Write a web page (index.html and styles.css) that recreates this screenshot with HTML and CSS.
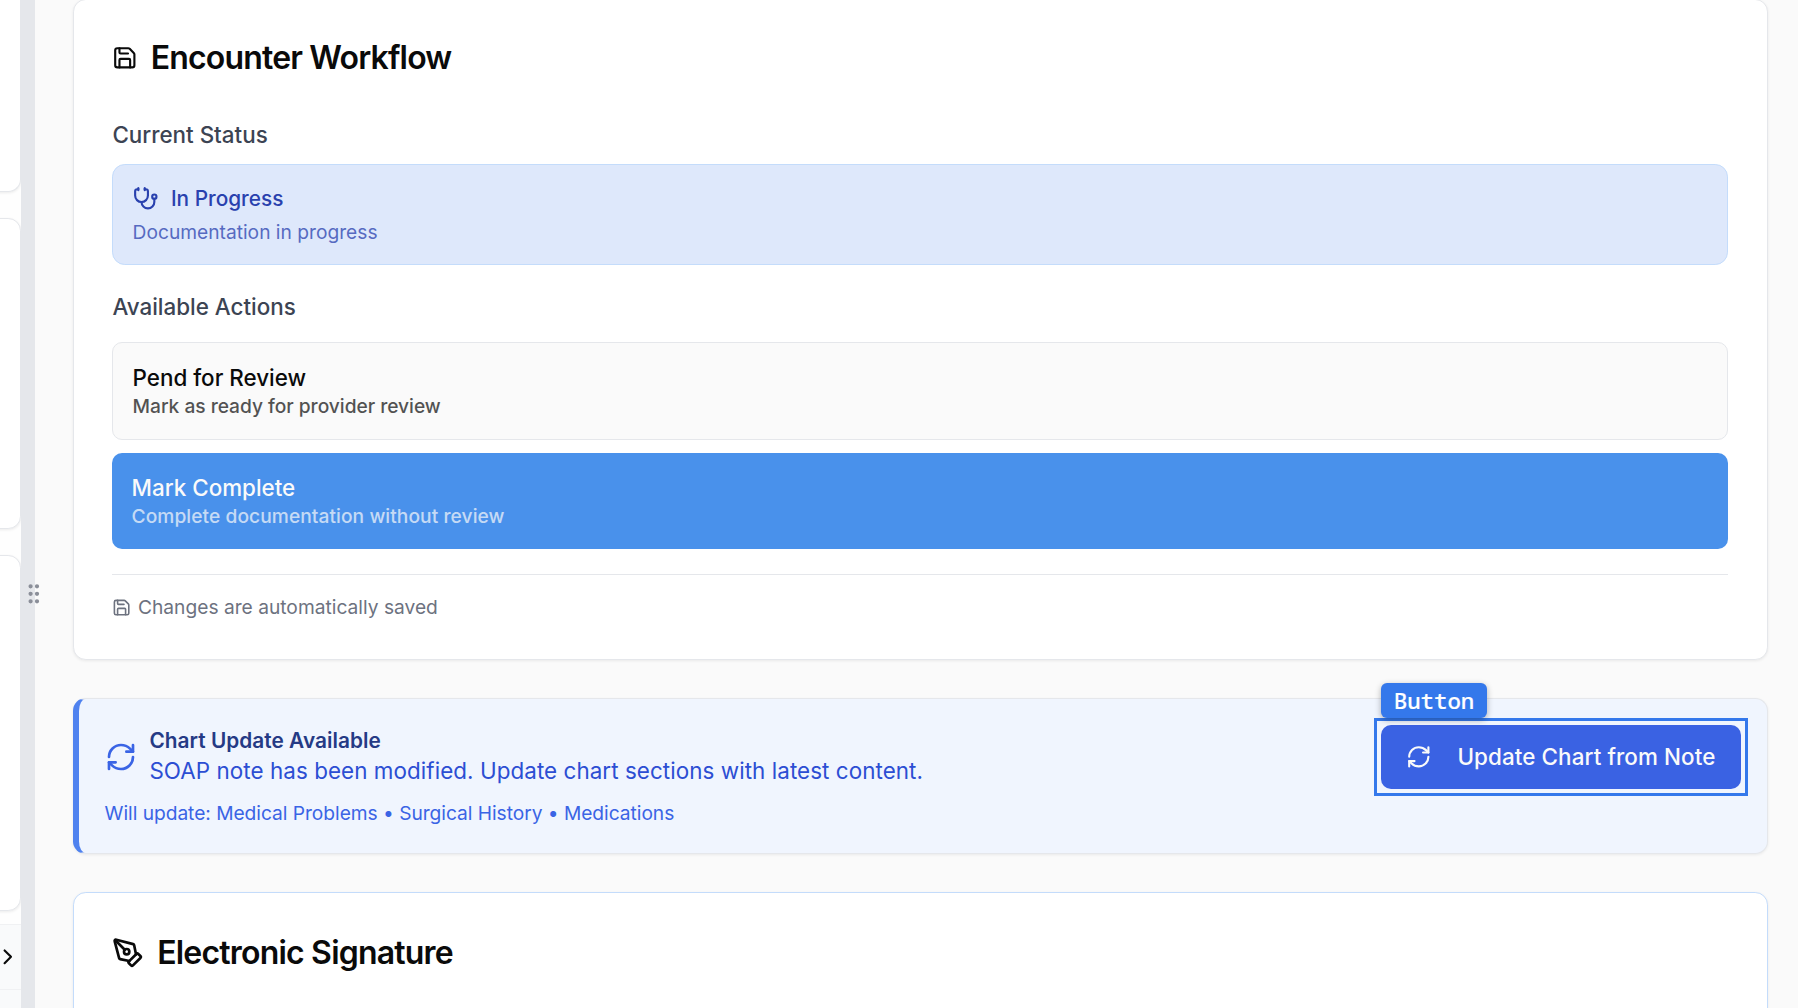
FILE: index.html
```html
<!DOCTYPE html>
<html lang="en">
<head>
<meta charset="utf-8">
<title>Encounter Workflow</title>
<link rel="stylesheet" href="styles.css">
</head>
<body>
<svg class="sprite" aria-hidden="true">
  <symbol id="save" viewBox="0 0 24 24"><path d="M15.2 3a2 2 0 0 1 1.4.6l3.8 3.8a2 2 0 0 1 .6 1.4V19a2 2 0 0 1-2 2H5a2 2 0 0 1-2-2V5a2 2 0 0 1 2-2z"/><path d="M17 21v-7a1 1 0 0 0-1-1H8a1 1 0 0 0-1 1v7"/><path d="M7 3v4a1 1 0 0 0 1 1h7"/></symbol>
  <symbol id="stethoscope" viewBox="0 0 24 24"><path d="M11 2v2"/><path d="M5 2v2"/><path d="M5 3H4a2 2 0 0 0-2 2v4a6 6 0 0 0 12 0V5a2 2 0 0 0-2-2h-1"/><path d="M8 15a6 6 0 0 0 12 0v-3"/><circle cx="20" cy="10" r="2"/></symbol>
  <symbol id="refresh" viewBox="0 0 24 24"><path d="M3 12a9 9 0 0 1 9-9 9.75 9.75 0 0 1 6.74 2.74L21 8"/><path d="M21 3v5h-5"/><path d="M21 12a9 9 0 0 1-9 9 9.75 9.75 0 0 1-6.74-2.74L3 16"/><path d="M8 16H3v5"/></symbol>
  <symbol id="pen" viewBox="0 0 24 24"><path d="M15.707 21.293a1 1 0 0 1-1.414 0l-1.586-1.586a1 1 0 0 1 0-1.414l5.586-5.586a1 1 0 0 1 1.414 0l1.586 1.586a1 1 0 0 1 0 1.414z"/><path d="m18 13-1.375-6.874a1 1 0 0 0-.746-.776L3.235 2.028a1 1 0 0 0-1.207 1.207L5.35 15.879a1 1 0 0 0 .776.746L13 18"/><path d="m2.3 2.3 7.286 7.286"/><circle cx="11" cy="11" r="2"/></symbol>
  <symbol id="chevron" viewBox="0 0 24 24"><path d="m9 18 6-6-6-6"/></symbol>
  <symbol id="grip" viewBox="0 0 24 24"><circle cx="9" cy="12" r="1"/><circle cx="9" cy="5" r="1"/><circle cx="9" cy="19" r="1"/><circle cx="15" cy="12" r="1"/><circle cx="15" cy="5" r="1"/><circle cx="15" cy="19" r="1"/></symbol>
</svg>
<div class="layout">
  <aside class="side">
    <div class="side-card side-card-first"></div>
    <div class="side-card side-card-second"></div>
    <div class="side-card side-card-third"></div>
    <div class="side-row"><svg class="icon icon-md chevron"><use href="#chevron"/></svg></div>
    <div class="side-row side-row-last"></div>
  </aside>
  <div class="splitter"><svg class="icon icon-md grip"><use href="#grip"/></svg></div>
  <main class="main">
    <section class="card workflow">
      <h2 class="title"><svg class="icon icon-md title-save"><use href="#save"/></svg>Encounter Workflow</h2>
      <h3 class="label">Current Status</h3>
      <div class="status">
        <div class="status-row"><svg class="icon icon-md"><use href="#stethoscope"/></svg>In Progress</div>
        <p class="status-text">Documentation in progress</p>
      </div>
      <h3 class="label label-actions">Available Actions</h3>
      <div class="actions">
        <button class="action action-outline"><span>Pend for Review</span><span class="action-hint">Mark as ready for provider review</span></button>
        <button class="action action-primary"><span>Mark Complete</span><span class="action-hint">Complete documentation without review</span></button>
      </div>
      <p class="saved"><svg class="icon icon-sm"><use href="#save"/></svg><span class="saved-text">Changes are automatically saved</span></p>
    </section>
    <section class="card alert">
      <div class="alert-row">
        <svg class="icon icon-lg alert-icon"><use href="#refresh"/></svg>
        <div class="alert-copy">
          <h4 class="alert-title">Chart Update Available</h4>
          <p class="alert-text">SOAP note has been modified. Update chart sections with latest content.</p>
        </div>
        <div class="update-wrap">
          <button class="update"><svg class="icon icon-md"><use href="#refresh"/></svg>Update Chart from Note</button>
          <div class="inspect"></div>
          <span class="inspect-tag">Button</span>
        </div>
      </div>
      <p class="alert-list">Will update: Medical Problems • Surgical History • Medications</p>
    </section>
    <section class="card signature">
      <h2 class="title title-signature"><svg class="icon icon-lg title-pen"><use href="#pen"/></svg>Electronic Signature</h2>
    </section>
  </main>
</div>
</body>
</html>
```
FILE: styles.css
```css
* { box-sizing: border-box; margin: 0; padding: 0; }
html, body { height: 100%; overflow: hidden; }
body { background: #fafafa; color: #0a0a0a; font-family: Inter, "Liberation Sans", sans-serif; font-size: 22.4px; }
button { font: inherit; border: 0; text-align: left; }

.sprite { display: none; }
.icon { flex: none; fill: none; stroke: currentColor; stroke-width: 2; stroke-linecap: round; stroke-linejoin: round; }
.icon-sm { width: 19.2px; height: 19.2px; }
.icon-md { width: 25.6px; height: 25.6px; }
.icon-lg { width: 32px; height: 32px; }

.layout { display: flex; height: 1008px; overflow: hidden; }

.side { display: flex; flex-direction: column; flex: none; width: 20.6px; background: #fefefe; overflow: hidden; }
.side-card { flex: none; align-self: flex-end; width: 60px; background: #fff; border: 1px solid #e5e7eb; border-radius: 12.8px; box-shadow: 0 1px 3px rgba(0, 0, 0, .08); margin-bottom: 26.4px; }
.side-card-first { height: 192px; border-top: 0; border-top-right-radius: 0; }
.side-card-second { height: 310.4px; }
.side-card-third { height: 355.6px; margin-bottom: 13.2px; }
.side-row { display: flex; align-items: center; flex: none; height: 65px; border-top: 1px solid #f0f1f3; background: #f9fafb; }
.side-row-last { height: 30px; }
.chevron { margin-left: -5.2px; color: #0a0a0a; }

.splitter { display: flex; align-items: center; justify-content: center; flex: none; width: 14.4px; background: #e5e7eb; z-index: 1; }
.grip { flex: none; margin: 180px -13px 0 0; color: #8b8f99; }

.main { display: flex; flex-direction: column; gap: 38.4px; flex: 1; min-width: 0; margin-top: -1.4px; padding: 0 30.4px 0 38px; }
.card { flex: none; background: #fff; border: 1px solid #e5e7eb; border-radius: 12.8px; box-shadow: 0 1px 3px rgba(0, 0, 0, .07); }

.workflow { padding: 38.4px; height: 661.2px; }
.title { display: flex; align-items: center; gap: 12.8px; height: 40px; font-size: 32px; font-weight: 600; letter-spacing: -.026em; line-height: 40px; white-space: nowrap; }
.title-save { margin-left: -.6px; margin-right: .6px; }
.label { margin-top: 40.8px; font-size: 22.4px; font-weight: 500; line-height: 32px; color: #3c4453; }
.label-actions { margin-top: 25.6px; }

.status { margin-top: 13.6px; padding: 19.2px; border: 1px solid #c4dcfb; border-radius: 12.8px; background: #dee8fb; color: #2941ae; }
.status-row { display: flex; align-items: center; gap: 12.8px; height: 28.4px; font-size: 20.8px; font-weight: 500; }
.status-text { margin-top: 7.2px; margin-bottom: -.8px; font-size: 19.2px; line-height: 25.6px; opacity: .75; }

.actions { display: flex; flex-direction: column; gap: 12.8px; margin-top: 19.2px; }
.action { display: flex; flex-direction: column; padding: 19.2px; border-radius: 10px; font-weight: 500; line-height: 32px; }
.action-outline { border: 1px solid #e5e7eb; background: #fafafa; color: #0a0a0a; }
.action-primary { background: #4991eb; color: #fafafa; }
.action-hint { font-size: 19.2px; line-height: 25.6px; opacity: .7; }
.action-outline .action-hint { letter-spacing: -.03px; }
.action-primary .action-hint { letter-spacing: .06px; }

.saved { display: flex; align-items: center; gap: 6.4px; margin-top: 25.6px; padding-top: 19.2px; border-top: 1px solid #e5e7eb; font-size: 19.2px; line-height: 25.6px; color: #6d727f; }
.saved-text { padding-top: 1px; margin-bottom: -1px; }

.alert { height: 155.5px; padding: 25.6px; border-left: 6px solid #4f82ef; background: #f0f5fe; }
.alert-row { display: flex; align-items: center; gap: 12.8px; height: 64px; }
.alert-icon { color: #3a64e5; }
.alert-copy { flex: 1; }
.alert-title { font-size: 20.8px; font-weight: 600; line-height: 30px; letter-spacing: .05px; color: #253a85; }
.alert-text { margin-top: -.8px; padding-bottom: .8px; line-height: 32px; letter-spacing: .07px; color: #2c4ed3; }
.alert-list { margin-top: 12px; font-size: 19.2px; line-height: 25.6px; letter-spacing: -.036px; color: #3a64e5; }

.update-wrap { position: relative; flex: none; }
.update { display: flex; align-items: center; gap: 25.6px; width: 360px; height: 64px; padding: 0 25.2px; border-radius: 10px; background: #3a62e3; color: #fafafa; font-weight: 500; letter-spacing: .1px; white-space: nowrap; }
.inspect { position: absolute; inset: -7px; border: 3px solid #3478eb; }
.inspect-tag { position: absolute; left: 0; bottom: 71px; width: 106px; height: 35px; border-radius: 6px; background: #3478eb; box-shadow: 0 2px 6px rgba(0, 0, 0, .3); color: #fff; font: 500 22.4px/35px "Noto Sans Mono", "DejaVu Sans Mono", monospace; text-align: center; -webkit-text-stroke: .2px #fff; }

.signature { height: 200px; padding: 38.4px; border-color: #c4dcfb; }
.title-signature { height: 43px; letter-spacing: -.025em; }
.title-pen { margin-left: -.8px; margin-right: .8px; }
```
